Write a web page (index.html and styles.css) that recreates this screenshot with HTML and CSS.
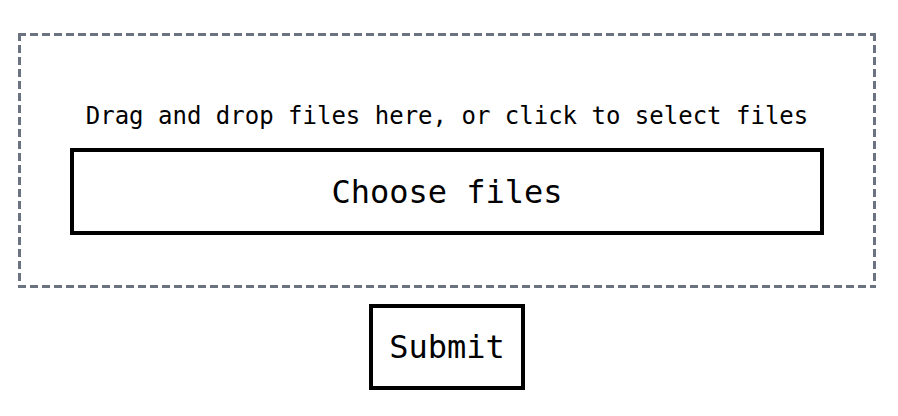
FILE: index.html
```html
<!DOCTYPE html>
<html lang="en">
<head>
<meta charset="utf-8">
<title>Upload</title>
<link rel="stylesheet" href="styles.css">
</head>
<body>
<form class="upload-form">
  <div class="dropzone">
    <p class="dropzone-hint">Drag and drop files here, or click to select files</p>
    <button type="button" class="choose-btn">Choose files</button>
  </div>
  <button type="submit" class="submit-btn">Submit</button>
</form>
</body>
</html>
```
FILE: styles.css
```css
html, body {
  margin: 0;
  padding: 0;
  background: #ffffff;
}

body {
  font-family: "DejaVu Sans Mono", monospace;
  color: #000000;
}

.upload-form {
  display: flex;
  flex-direction: column;
  align-items: center;
  padding: 33px 22px 0 18px;
  gap: 16px;
}

.dropzone {
  box-sizing: border-box;
  width: 858px;
  padding: 69px 52px 53px;
  display: flex;
  flex-direction: column;
  align-items: stretch;
  background:
    repeating-linear-gradient(90deg, #6b7280 0 8px, transparent 8px 12px) left top / 100% 3px no-repeat,
    repeating-linear-gradient(90deg, #6b7280 0 8px, transparent 8px 12px) left bottom / 100% 3px no-repeat,
    repeating-linear-gradient(180deg, #6b7280 0 8px, transparent 8px 12px) left top / 3px 100% no-repeat,
    repeating-linear-gradient(180deg, #6b7280 0 8px, transparent 8px 12px) right top / 3px 100% no-repeat;
}

.dropzone-hint {
  margin: 0 0 18px;
  font-size: 24px;
  line-height: 28px;
  text-align: center;
  white-space: nowrap;
}

.choose-btn,
.submit-btn {
  box-sizing: border-box;
  font-family: "DejaVu Sans Mono", monospace;
  font-size: 32px;
  color: #000000;
  background: #ffffff;
  border: 4px solid #000000;
  border-radius: 0;
  margin: 0;
  cursor: pointer;
}

.choose-btn {
  height: 87px;
  width: 100%;
  padding: 0;
}

.submit-btn {
  height: 86px;
  width: 156px;
  padding: 0;
}
```
